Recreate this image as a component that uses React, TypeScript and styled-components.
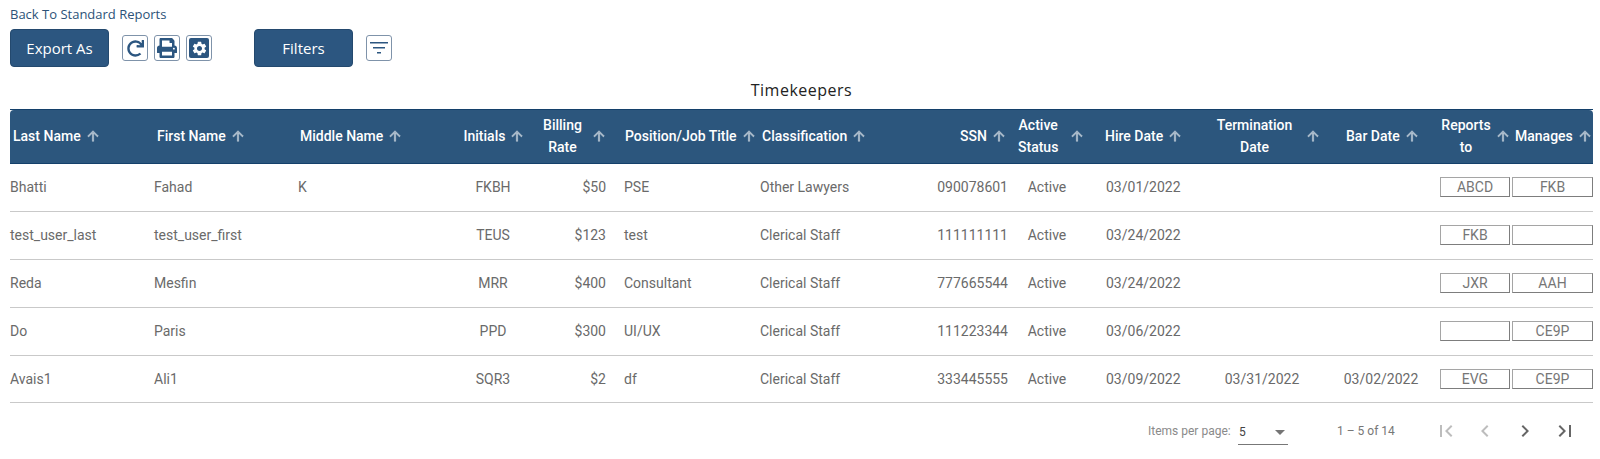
import React from 'react'
import styled, { createGlobalStyle } from 'styled-components'
import { FaRedo, FaPrint } from 'react-icons/fa'
import { MdSettings } from 'react-icons/md'

const GlobalStyle = createGlobalStyle`
  html, body {
    margin: 0;
    padding: 0;
    background: #fff;
    font-family: Roboto, "Liberation Sans", sans-serif;
  }
`

const Page = styled.div`
  width: 1600px;
  height: 459px;
  overflow: hidden;
  box-sizing: border-box;
  padding: 7px 7px 0 10px;
`

const BackLink = styled.a`
  display: block;
  height: 15px;
  line-height: 15px;
  font-family: "Open Sans", sans-serif;
  font-size: 13px;
  color: #2c5278;
`

const Toolbar = styled.div`
  display: flex;
  align-items: center;
  height: 38px;
  margin-top: 7px;
`

const PrimaryButton = styled.button<{ $gap: number }>`
  width: 99px;
  height: 38px;
  margin-right: ${p => p.$gap}px;
  padding: 0;
  border: 1px solid #24496e;
  border-radius: 4px;
  background: #2c5680;
  color: #fff;
  font-family: "Open Sans", sans-serif;
  font-size: 15px;
`

const IconBox = styled.span<{ $gap?: number }>`
  display: flex;
  align-items: center;
  justify-content: center;
  box-sizing: border-box;
  width: 26px;
  height: 26px;
  margin-right: ${p => p.$gap ?? 6}px;
  border: 1px solid #7f93aa;
  border-radius: 3px;
  background: #fff;
  color: #2c5680;
`

const GearSquare = styled.span`
  display: flex;
  align-items: center;
  justify-content: center;
  width: 20px;
  height: 20px;
  border-radius: 2px;
  background: #2c5680;
  color: #fff;
`

const Title = styled.div`
  height: 42px;
  line-height: 47px;
  text-align: center;
  font-family: "Open Sans", sans-serif;
  font-size: 16px;
  letter-spacing: 0.5px;
  color: #222;
`

const Table = styled.table`
  width: 1583px;
  table-layout: fixed;
  border-collapse: collapse;
`

const HeaderRow = styled.tr`
  height: 54px;
  background: #2c567d;
`

const HeaderCell = styled.th<{ $pad: number }>`
  padding: 0 0 0 ${p => p.$pad}px;
  vertical-align: middle;
  border-top: 1px solid #14406a;
  border-bottom: 1px solid #14406a;
  &:first-child { border-top-left-radius: 4px; }
  &:last-child { border-top-right-radius: 4px; }
`

const SortButton = styled.div<{ $justify: string; $right: number; $gap: number }>`
  display: flex;
  align-items: center;
  justify-content: ${p => p.$justify};
  gap: ${p => p.$gap}px;
  padding: 0 ${p => p.$right}px 2px 0;
`

const SortLabel = styled.span<{ $grow?: boolean }>`
  flex: ${p => (p.$grow ? 1 : 'none')};
  font-size: 14px;
  font-weight: 500;
  line-height: 22px;
  text-align: center;
  color: #fff;
`

const SortArrow = styled.svg`
  flex: none;
  width: 16px;
  height: 16px;
  fill: rgba(255, 255, 255, 0.55);
  stroke: rgba(255, 255, 255, 0.55);
  stroke-width: 1;
`

const Row = styled.tr`
  height: 47.9px;
  border-bottom: 1px solid #c9c9c9;
`

const Cell = styled.td<{ $align: string; $pl: number; $pr: number }>`
  padding: 0 ${p => p.$pr}px 0 ${p => p.$pl}px;
  text-align: ${p => p.$align};
  font-size: 14px;
  color: #6a6a6a;
  white-space: nowrap;
`

const RefButton = styled.span`
  display: block;
  box-sizing: border-box;
  height: 20px;
  line-height: 18px;
  text-align: center;
  font-size: 14px;
  color: #767676;
  border: 1px solid #7d7d7d;
  border-top-color: #a5a5a5;
  border-left-color: #a5a5a5;
`

const Paginator = styled.div`
  display: flex;
  align-items: center;
  height: 56px;
  padding-left: 1138px;
  color: #8a8a8a;
  font-size: 12px;
`

const PerPage = styled.span`
  width: 90px;
`

const Select = styled.div`
  display: flex;
  align-items: center;
  justify-content: space-between;
  box-sizing: border-box;
  width: 50px;
  height: 26px;
  padding: 1px 3px 0 1px;
  margin-top: 2px;
  border-bottom: 1px solid #777;
  color: #444;
`

const Caret = styled.span`
  width: 0;
  height: 0;
  border-left: 5px solid transparent;
  border-right: 5px solid transparent;
  border-top: 5px solid #757575;
`

const RangeLabel = styled.span`
  width: 89px;
  margin-left: 49px;
  color: #777;
`

const PageButton = styled.span<{ $off?: boolean }>`
  display: flex;
  align-items: center;
  justify-content: center;
  width: 39.6px;
  height: 40px;
  svg {
    width: 24px;
    height: 24px;
    fill: ${p => (p.$off ? '#bdbdbd' : '#666')};
  }
`

type Column = {
  label: React.ReactNode
  width: number
  pad: number
  right?: number
  gap?: number
  justify: string
  grow?: boolean
  align: string
  pl?: number
  pr?: number
}

const columns: Column[] = [
  { label: 'Last Name', width: 143, pad: 3, justify: 'flex-start', align: 'left' },
  { label: 'First Name', width: 145, pad: 4, justify: 'flex-start', align: 'left', pl: 1 },
  { label: 'Middle Name', width: 150, pad: 2, justify: 'flex-start', align: 'left' },
  { label: 'Initials', width: 90, pad: 6, justify: 'center', align: 'center' },
  { label: <>Billing<br />Rate</>, width: 74, pad: 0, right: 5, justify: 'center', grow: true, align: 'right', pr: 6 },
  { label: 'Position/Job Title', width: 146, pad: 13, justify: 'flex-start', align: 'left', pl: 12 },
  { label: 'Classification', width: 154, pad: 4, justify: 'flex-start', align: 'left', pl: 2 },
  { label: 'SSN', width: 100, pad: 0, right: 5, justify: 'flex-end', align: 'right', pr: 4 },
  { label: <>Active<br />Status</>, width: 92, pad: 6, gap: 11, justify: 'flex-start', align: 'center', pr: 22 },
  { label: 'Hire Date', width: 104, pad: 1, justify: 'flex-start', align: 'left', pl: 2 },
  { label: <>Termination<br />Date</>, width: 116, pad: 0, justify: 'center', grow: true, align: 'center', pr: 8 },
  { label: 'Bar Date', width: 114, pad: 22, justify: 'flex-start', align: 'center' },
  { label: <>Reports<br />to</>, width: 74, pad: 4, right: 2, justify: 'center', grow: true, align: 'center', pl: 2, pr: 2 },
  { label: 'Manages', width: 81, pad: 3, justify: 'flex-start', align: 'center' },
]

const rows = [
  ['Bhatti', 'Fahad', 'K', 'FKBH', '$50', 'PSE', 'Other Lawyers', '090078601', 'Active', '03/01/2022', '', '', 'ABCD', 'FKB'],
  ['test_user_last', 'test_user_first', '', 'TEUS', '$123', 'test', 'Clerical Staff', '111111111', 'Active', '03/24/2022', '', '', 'FKB', ''],
  ['Reda', 'Mesfin', '', 'MRR', '$400', 'Consultant', 'Clerical Staff', '777665544', 'Active', '03/24/2022', '', '', 'JXR', 'AAH'],
  ['Do', 'Paris', '', 'PPD', '$300', 'UI/UX', 'Clerical Staff', '111223344', 'Active', '03/06/2022', '', '', '', 'CE9P'],
  ['Avais1', 'Ali1', '', 'SQR3', '$2', 'df', 'Clerical Staff', '333445555', 'Active', '03/09/2022', '03/31/2022', '03/02/2022', 'EVG', 'CE9P'],
]

const pageIcons = [
  { d: 'M18.41 16.59L13.82 12l4.59-4.59L17 6l-6 6 6 6zM6 6h2v12H6z', off: true },
  { d: 'M15.41 16.59L10.83 12l4.58-4.59L14 6l-6 6 6 6 1.41-1.41z', off: true },
  { d: 'M8.59 16.59L13.17 12 8.59 7.41 10 6l6 6-6 6-1.41-1.41z', off: false },
  { d: 'M5.59 7.41L10.18 12l-4.59 4.59L7 18l6-6-6-6zM16 6h2v12h-2z', off: false },
]

export default function App() {
  return (
    <Page>
      <GlobalStyle />
      <BackLink>Back To Standard Reports</BackLink>
      <Toolbar>
        <PrimaryButton $gap={13}>Export As</PrimaryButton>
        <IconBox><FaRedo size={17} /></IconBox>
        <IconBox><FaPrint size={20} /></IconBox>
        <IconBox $gap={42}><GearSquare><MdSettings size={17} /></GearSquare></IconBox>
        <PrimaryButton $gap={13}>Filters</PrimaryButton>
        <IconBox>
          <svg width="18" height="14" viewBox="0 0 18 14">
            <rect x="0" y="1" width="18" height="1.5" fill="#2c5680" />
            <rect x="3" y="6" width="12" height="1.5" fill="#2c5680" />
            <rect x="7" y="11" width="4" height="1.5" fill="#2c5680" />
          </svg>
        </IconBox>
      </Toolbar>
      <Title>Timekeepers</Title>
      <Table>
        <colgroup>
          {columns.map((c, i) => <col key={i} style={{ width: c.width }} />)}
        </colgroup>
        <thead>
          <HeaderRow>
            {columns.map((c, i) => (
              <HeaderCell key={i} $pad={c.pad}>
                <SortButton $justify={c.justify} $right={c.right ?? 3} $gap={c.gap ?? 4}>
                  <SortLabel $grow={c.grow}>{c.label}</SortLabel>
                  <SortArrow viewBox="0 0 24 24">
                    <path d="M4 12l1.41 1.41L11 7.83V20h2V7.83l5.58 5.59L20 12l-8-8-8 8z" />
                  </SortArrow>
                </SortButton>
              </HeaderCell>
            ))}
          </HeaderRow>
        </thead>
        <tbody>
          {rows.map((row, r) => (
            <Row key={r}>
              {row.map((value, i) => (
                <Cell key={i} $align={columns[i].align} $pl={columns[i].pl ?? 0} $pr={columns[i].pr ?? 0}>
                  {i >= 12 ? <RefButton>{value}</RefButton> : value}
                </Cell>
              ))}
            </Row>
          ))}
        </tbody>
      </Table>
      <Paginator>
        <PerPage>Items per page:</PerPage>
        <Select>5<Caret /></Select>
        <RangeLabel>1 – 5 of 14</RangeLabel>
        {pageIcons.map((p, i) => (
          <PageButton key={i} $off={p.off}>
            <svg viewBox="0 0 24 24"><path d={p.d} /></svg>
          </PageButton>
        ))}
      </Paginator>
    </Page>
  )
}
